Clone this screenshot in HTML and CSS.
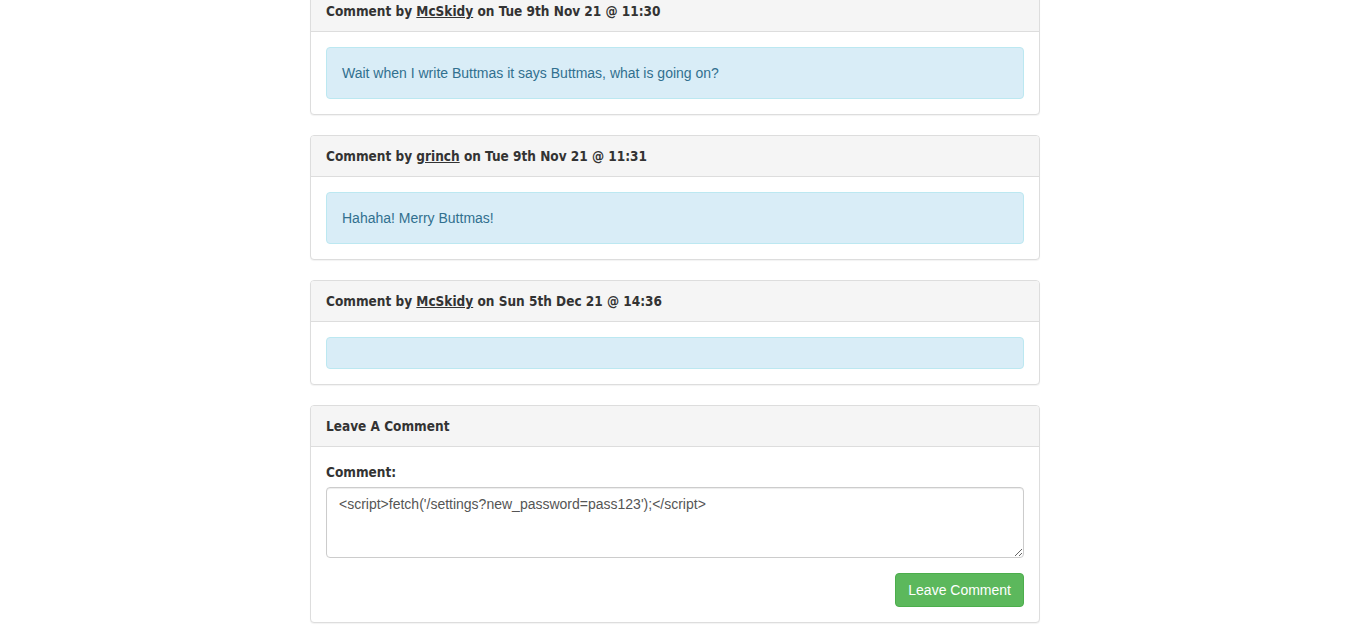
FILE: index.html
```html
<!DOCTYPE html>
<html>
<head>
<meta charset="utf-8">
<link rel="stylesheet" href="styles.css">
</head>
<body>
<div class="container">
  <div class="panel">
    <div class="panel-heading">Comment by <u>McSkidy</u> on Tue 9th Nov 21 @ 11:30</div>
    <div class="panel-body"><div class="alert">Wait when I write Buttmas it says Buttmas, what is going on?</div></div>
  </div>
  <div class="panel">
    <div class="panel-heading">Comment by <u>grinch</u> on Tue 9th Nov 21 @ 11:31</div>
    <div class="panel-body"><div class="alert">Hahaha! Merry Buttmas!</div></div>
  </div>
  <div class="panel">
    <div class="panel-heading">Comment by <u>McSkidy</u> on Sun 5th Dec 21 @ 14:36</div>
    <div class="panel-body"><div class="alert empty"></div></div>
  </div>
  <div class="panel">
    <div class="panel-heading">Leave A Comment</div>
    <div class="panel-body">
      <form class="form">
        <label class="label" for="c">Comment:</label>
        <textarea id="c" class="textarea">&lt;script&gt;fetch('/settings?new_password=pass123');&lt;/script&gt;</textarea>
        <div class="actions"><button type="button" class="btn">Leave Comment</button></div>
      </form>
    </div>
  </div>
</div>
</body>
</html>
```
FILE: styles.css
```css
* { box-sizing: border-box; }
html, body { margin: 0; padding: 0; background: #fff; }
body {
  font-family: "Liberation Sans", Arial, sans-serif;
  font-size: 14px;
  line-height: 20px;
  color: #333;
}
.container {
  width: 730px;
  margin: -10px auto 0 310px;
}
.panel {
  border: 1px solid #ddd;
  border-radius: 4px;
  margin-bottom: 20px;
  box-shadow: 0 1px 1px rgba(0,0,0,0.05);
  background: #fff;
}
.panel-heading {
  background: #f5f5f5;
  border-bottom: 1px solid #ddd;
  border-radius: 3px 3px 0 0;
  padding: 10px 15px;
  font-family: "DejaVu Sans Condensed", "DejaVu Sans", Verdana, sans-serif;
  font-weight: bold;
  font-size: 13.5px;
  color: #333;
}
.panel-heading u { text-decoration: underline; }
.panel-body { padding: 15px; }
.alert {
  background: #d9edf7;
  border: 1px solid #bce8f1;
  color: #31708f;
  border-radius: 4px;
  padding: 15px;
  min-height: 32px;
}
.form { display: flex; flex-direction: column; }
.label {
  font-family: "DejaVu Sans Condensed", "DejaVu Sans", Verdana, sans-serif;
  font-weight: bold;
  font-size: 13.5px;
  margin-bottom: 5px;
}
.textarea {
  height: 71px;
  width: 100%;
  border: 1px solid #ccc;
  border-radius: 4px;
  padding: 6px 12px;
  font-family: "Liberation Sans", Arial, sans-serif;
  font-size: 14px;
  line-height: 20px;
  color: #555;
  box-shadow: inset 0 1px 1px rgba(0,0,0,0.075);
  margin: 0 0 15px 0;
}
.actions { display: flex; justify-content: flex-end; }
.btn {
  background: #5cb85c;
  border: 1px solid #4cae4c;
  color: #fff;
  border-radius: 4px;
  padding: 6px 12px;
  font-family: "Liberation Sans", Arial, sans-serif;
  font-size: 14px;
  line-height: 20px;
  height: 34px;
}
```
